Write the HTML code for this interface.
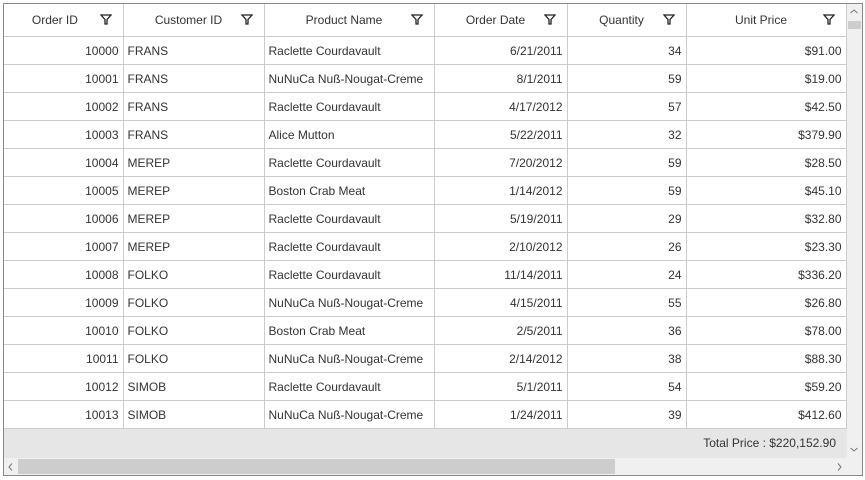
<!DOCTYPE html>
<html><head><style>
body{margin:0;width:865px;height:480px;background:#fff;font-family:"Segoe UI","Liberation Sans",sans-serif;font-size:12px;color:#333;position:relative;overflow:hidden}
.box{position:absolute;left:3px;top:3px;width:858px;height:471px;border:1px solid #888;overflow:hidden;background:#fff}
table{position:absolute;left:0;top:0;border-collapse:collapse;table-layout:fixed}
td,th{height:27px;border-right:1px solid #ccc;border-bottom:1px solid #ccc;padding:0 4px;white-space:nowrap;overflow:hidden;font-weight:normal}
th{height:32px;color:#333;position:relative;text-align:center}
th svg{position:absolute;right:11px;top:10px}
td.r{text-align:right}
.foot{position:absolute;left:0;top:425px;width:843px;height:29px;background:#e6e6e6;text-align:right;line-height:29px;font-size:12px}
.foot span{margin-right:11px}
.hs{position:absolute;left:0;top:454px;width:843px;height:17px;background:#f0f0f0}
.hs .t{position:absolute;left:14px;top:1px;width:597px;height:15px;background:#cdcdcd}
.vs{position:absolute;left:843px;top:0;width:15px;height:454px;background:#f0f0f0}
.vs .t{position:absolute;left:1px;top:17px;width:13px;height:8px;background:#cdcdcd}
.ar{position:absolute}
.corner{position:absolute;left:843px;top:454px;width:15px;height:17px;background:#f0f0f0}
</style></head><body>
<div class="box">
<table>
<colgroup><col style="width:119px"><col style="width:141px"><col style="width:170px"><col style="width:133px"><col style="width:119px"><col style="width:160px"></colgroup>
<tr>
<th>Order ID&nbsp;&nbsp;&nbsp;&nbsp;&nbsp;<svg width="12" height="11" viewBox="0 0 12 11"><path d="M1 1H11L7 5.5V10H5V5.5Z" fill="none" stroke="#222" stroke-width="1.3"/></svg></th>
<th>Customer ID&nbsp;&nbsp;&nbsp;<svg width="12" height="11" viewBox="0 0 12 11"><path d="M1 1H11L7 5.5V10H5V5.5Z" fill="none" stroke="#222" stroke-width="1.3"/></svg></th>
<th>Product Name&nbsp;&nbsp;&nbsp;<svg width="12" height="11" viewBox="0 0 12 11"><path d="M1 1H11L7 5.5V10H5V5.5Z" fill="none" stroke="#222" stroke-width="1.3"/></svg></th>
<th>Order Date&nbsp;&nbsp;&nbsp;<svg width="12" height="11" viewBox="0 0 12 11"><path d="M1 1H11L7 5.5V10H5V5.5Z" fill="none" stroke="#222" stroke-width="1.3"/></svg></th>
<th>Quantity&nbsp;&nbsp;&nbsp;<svg width="12" height="11" viewBox="0 0 12 11"><path d="M1 1H11L7 5.5V10H5V5.5Z" fill="none" stroke="#222" stroke-width="1.3"/></svg></th>
<th>Unit Price&nbsp;&nbsp;&nbsp;<svg width="12" height="11" viewBox="0 0 12 11"><path d="M1 1H11L7 5.5V10H5V5.5Z" fill="none" stroke="#222" stroke-width="1.3"/></svg></th>
</tr>
<tr><td class="r">10000</td><td>FRANS</td><td>Raclette Courdavault</td><td class="r">6/21/2011</td><td class="r">34</td><td class="r">$91.00</td></tr>
<tr><td class="r">10001</td><td>FRANS</td><td>NuNuCa Nuß-Nougat-Creme</td><td class="r">8/1/2011</td><td class="r">59</td><td class="r">$19.00</td></tr>
<tr><td class="r">10002</td><td>FRANS</td><td>Raclette Courdavault</td><td class="r">4/17/2012</td><td class="r">57</td><td class="r">$42.50</td></tr>
<tr><td class="r">10003</td><td>FRANS</td><td>Alice Mutton</td><td class="r">5/22/2011</td><td class="r">32</td><td class="r">$379.90</td></tr>
<tr><td class="r">10004</td><td>MEREP</td><td>Raclette Courdavault</td><td class="r">7/20/2012</td><td class="r">59</td><td class="r">$28.50</td></tr>
<tr><td class="r">10005</td><td>MEREP</td><td>Boston Crab Meat</td><td class="r">1/14/2012</td><td class="r">59</td><td class="r">$45.10</td></tr>
<tr><td class="r">10006</td><td>MEREP</td><td>Raclette Courdavault</td><td class="r">5/19/2011</td><td class="r">29</td><td class="r">$32.80</td></tr>
<tr><td class="r">10007</td><td>MEREP</td><td>Raclette Courdavault</td><td class="r">2/10/2012</td><td class="r">26</td><td class="r">$23.30</td></tr>
<tr><td class="r">10008</td><td>FOLKO</td><td>Raclette Courdavault</td><td class="r">11/14/2011</td><td class="r">24</td><td class="r">$336.20</td></tr>
<tr><td class="r">10009</td><td>FOLKO</td><td>NuNuCa Nuß-Nougat-Creme</td><td class="r">4/15/2011</td><td class="r">55</td><td class="r">$26.80</td></tr>
<tr><td class="r">10010</td><td>FOLKO</td><td>Boston Crab Meat</td><td class="r">2/5/2011</td><td class="r">36</td><td class="r">$78.00</td></tr>
<tr><td class="r">10011</td><td>FOLKO</td><td>NuNuCa Nuß-Nougat-Creme</td><td class="r">2/14/2012</td><td class="r">38</td><td class="r">$88.30</td></tr>
<tr><td class="r">10012</td><td>SIMOB</td><td>Raclette Courdavault</td><td class="r">5/1/2011</td><td class="r">54</td><td class="r">$59.20</td></tr>
<tr><td class="r">10013</td><td>SIMOB</td><td>NuNuCa Nuß-Nougat-Creme</td><td class="r">1/24/2011</td><td class="r">39</td><td class="r">$412.60</td></tr>
</table>
<div class="foot"><span>Total Price : $220,152.90</span></div>
<div class="hs"><div class="t"></div>
<svg class="ar" style="left:4px;top:5px" width="5" height="8"><path d="M4 0.5L1 4L4 7.5" fill="none" stroke="#777"/></svg>
<svg class="ar" style="left:833px;top:5px" width="5" height="8"><path d="M1 0.5L4 4L1 7.5" fill="none" stroke="#777"/></svg></div>
<div class="vs"><div class="t"></div>
<svg class="ar" style="left:3px;top:5px" width="8" height="5"><path d="M0.5 4L4 1L7.5 4" fill="none" stroke="#777"/></svg>
<svg class="ar" style="left:3px;top:443px" width="8" height="5"><path d="M0.5 1L4 4L7.5 1" fill="none" stroke="#777"/></svg></div>
<div class="corner"></div>
</div>
</body></html>
